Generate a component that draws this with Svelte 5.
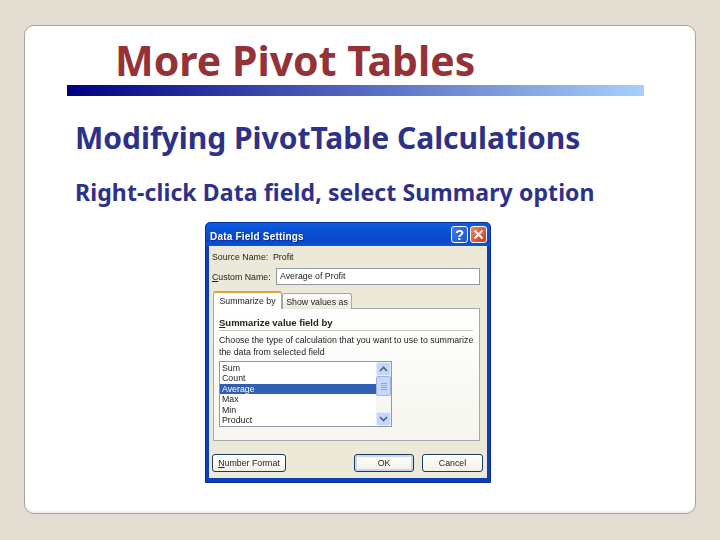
<script>
  const items = ["Sum", "Count", "Average", "Max", "Min", "Product"];
  let selected = "Average";
</script>

<div class="page">
  <div class="card">
    <h1>More Pivot Tables</h1>
    <div class="bar"></div>
    <h2>Modifying PivotTable Calculations</h2>
    <p class="sub">Right-click Data field, select Summary option</p>

    <div class="dialog">
      <div class="titlebar">
        <span class="caption">Data Field Settings</span>
        <span class="tbtn help">?</span>
        <span class="tbtn close">
          <svg width="11" height="11" viewBox="0 0 11 11">
            <path d="M1.500 1.500l8 8M9.500 1.500l-8 8" stroke="#fff" stroke-width="2" />
          </svg>
        </span>
      </div>
      <div class="body">
        <div class="row source">
          <span class="lbl">Source Name:</span><span>Profit</span>
        </div>
        <div class="row custom">
          <span class="lbl"><u>C</u>ustom Name:</span>
          <div class="input">Average of Profit</div>
        </div>
        <div class="tabs">
          <div class="tab active">Summarize by</div>
          <div class="tab">Show values as</div>
        </div>
        <div class="panel">
          <div class="heading"><u>S</u>ummarize value field by</div>
          <div class="rule"></div>
          <div class="desc">
            Choose the type of calculation that you want to use to summarize<br />
            the data from selected field
          </div>
          <div class="list">
            <div class="rows">
              {#each items as item}
                <div class="item" class:sel={item === selected}>{item}</div>
              {/each}
            </div>
            <div class="scroll">
              <div class="arrow">
                <svg width="9" height="6" viewBox="0 0 9 6">
                  <path d="M1 5l3.500-3.500L8 5" fill="none" stroke="#4d6185" stroke-width="1.600" />
                </svg>
              </div>
              <div class="thumb"><i></i><i></i><i></i><i></i></div>
              <div class="track"></div>
              <div class="arrow">
                <svg width="9" height="6" viewBox="0 0 9 6">
                  <path d="M1 1l3.500 3.500L8 1" fill="none" stroke="#4d6185" stroke-width="1.600" />
                </svg>
              </div>
            </div>
          </div>
        </div>
        <div class="buttons">
          <button class="num"><u>N</u>umber Format</button>
          <span class="spacer"></span>
          <button class="ok">OK</button>
          <button class="cancel">Cancel</button>
        </div>
      </div>
    </div>
  </div>
</div>

<style>
  :global(body) {
    margin: 0;
  }
  .page {
    width: 720px;
    height: 540px;
    box-sizing: border-box;
    padding: 25px 24px 26px;
    background: #e3dcd1;
    overflow: hidden;
  }
  .card {
    height: 100%;
    box-sizing: border-box;
    background: #fff;
    border: 1px solid #a3a39d;
    border-radius: 10px;
    box-shadow: inset 0 -4px 4px -4px #d5d5d5;
    font-family: "Noto Sans", sans-serif;
  }
  h1 {
    margin: 0;
    padding: 9px 0 0 90px;
    height: 50px;
    font-size: 41px;
    line-height: 50px;
    font-weight: 700;
    color: #953237;
  }
  .bar {
    margin-left: 42px;
    width: 577px;
    height: 11px;
    background: linear-gradient(90deg, #000080, #a6d0fc);
  }
  h2 {
    margin: 23px 0 0 50px;
    font-size: 30px;
    line-height: 38px;
    font-weight: 700;
    color: #2e3188;
  }
  .sub {
    margin: 20px 0 0 50px;
    font-size: 23px;
    line-height: 30px;
    font-weight: 700;
    color: #2e3188;
    letter-spacing: 0.11px;
  }
  .dialog {
    margin: 15px 0 0 180px;
    width: 286px;
    height: 261px;
    box-sizing: border-box;
    background: #0a3fb8;
    border: 1px solid #0b2f96;
    border-radius: 5px 5px 0 0;
    padding: 0 3px 4px 3px;
    display: flex;
    flex-direction: column;
    font-family: "Liberation Sans", sans-serif;
    font-size: 8.800px;
    color: #222;
    filter: blur(0.35px);
  }
  .titlebar {
    height: 23px;
    flex: none;
    margin: 0 -3px;
    padding: 0 3px 0 4px;
    border-radius: 5px 5px 0 0;
    background: linear-gradient(180deg, #0b5fe0, #0a52d4 30%, #0a48c8 80%, #0b56da);
    display: flex;
    align-items: center;
    gap: 2px;
  }
  .caption {
    flex: 1;
    padding-top: 3px;
    color: #fff;
    font-weight: 700;
    font-size: 10px;
    letter-spacing: 0.2px;
    text-shadow: 1px 1px 0 #0a2f90;
  }
  .tbtn {
    width: 17px;
    height: 17px;
    box-sizing: border-box;
    border: 1px solid #fff;
    border-radius: 3px;
    display: flex;
    align-items: center;
    justify-content: center;
    color: #fff;
  }
  .help {
    background: linear-gradient(135deg, #3c7cf0, #1d54d6);
    font-size: 15px;
    font-weight: 700;
  }
  .close {
    background: linear-gradient(135deg, #e9866a, #c63c1c);
  }
  .body {
    flex: 1;
    background: #ece9d8;
    padding: 4px 7px 5px 4px;
    display: flex;
    flex-direction: column;
  }
  .row {
    display: flex;
    align-items: center;
    margin-left: -1px;
  }
  .lbl {
    width: 61px;
    flex: none;
  }
  .source {
    height: 14px;
  }
  .custom {
    height: 17px;
    margin-top: 4px;
  }
  .custom .lbl {
    width: 64px;
  }
  .input {
    flex: 1;
    height: 100%;
    box-sizing: border-box;
    background: #fff;
    border: 1px solid #8a9aa8;
    padding: 1px 3px;
    line-height: 13px;
  }
  .tabs {
    display: flex;
    margin-top: 6px;
    height: 18px;
    flex: none;
    position: relative;
    z-index: 1;
  }
  .tab {
    box-sizing: border-box;
    height: 16px;
    margin-top: 2px;
    width: 70px;
    line-height: 17px;
    text-align: center;
    white-space: nowrap;
    background: linear-gradient(180deg, #fff, #ece9d8);
    border: 1px solid #a2aab0;
    border-bottom: none;
    border-radius: 3px 3px 0 0;
  }
  .tab.active {
    height: 18px;
    margin-top: 0;
    width: 69px;
    background: #fff;
    border-top: 2px solid #e6a23c;
    line-height: 16px;
  }
  .panel {
    height: 133px;
    flex: none;
    box-sizing: border-box;
    background: linear-gradient(180deg, #fff, #f6f5ee);
    border: 1px solid #a2aab0;
    margin-top: -1px;
    padding: 8px 6px 0 5px;
  }
  .heading {
    font-weight: 700;
    font-size: 9.500px;
    line-height: 11px;
  }
  .rule {
    height: 1px;
    background: #c8c8c0;
    margin-top: 2px;
  }
  .desc {
    margin-top: 3px;
    line-height: 12px;
    white-space: nowrap;
  }
  .list {
    margin-top: 3px;
    width: 173px;
    height: 66px;
    box-sizing: border-box;
    background: #fff;
    border: 1px solid #8a9aa8;
    display: flex;
  }
  .rows {
    flex: 1;
    padding-top: 1px;
  }
  .item {
    height: 10.400px;
    line-height: 10.400px;
    padding-left: 2px;
  }
  .item.sel {
    background: #2f5fb0;
    color: #fff;
  }
  .scroll {
    width: 15px;
    flex: none;
    display: flex;
    flex-direction: column;
    background: #f6f6f2;
  }
  .arrow {
    height: 14px;
    flex: none;
    display: flex;
    align-items: center;
    justify-content: center;
    background: #c6d6f8;
    border: 1px solid #e6eefc;
    box-sizing: border-box;
    border-radius: 2px;
  }
  .thumb {
    height: 20px;
    flex: none;
    box-sizing: border-box;
    background: #c8d8fa;
    border: 1px solid #9cb4e4;
    border-radius: 2px;
    display: flex;
    flex-direction: column;
    align-items: center;
    justify-content: center;
    gap: 1px;
  }
  .thumb i {
    display: block;
    width: 6px;
    height: 1px;
    background: #8aa2d6;
  }
  .track {
    flex: 1;
  }
  .buttons {
    display: flex;
    margin: 13px -3px 0 -1px;
    gap: 8px;
  }
  .spacer {
    flex: 1;
  }
  button {
    height: 18px;
    padding: 0;
    box-sizing: border-box;
    border: 1px solid #1c3a5c;
    border-radius: 3px;
    background: linear-gradient(180deg, #fff, #f2f1e8);
    font-family: inherit;
    font-size: 8.800px;
    color: #222;
  }
  .num {
    width: 74px;
  }
  .ok {
    width: 60px;
    box-shadow: inset 0 0 0 2px #c8d6f0;
  }
  .cancel {
    width: 61px;
  }
</style>
